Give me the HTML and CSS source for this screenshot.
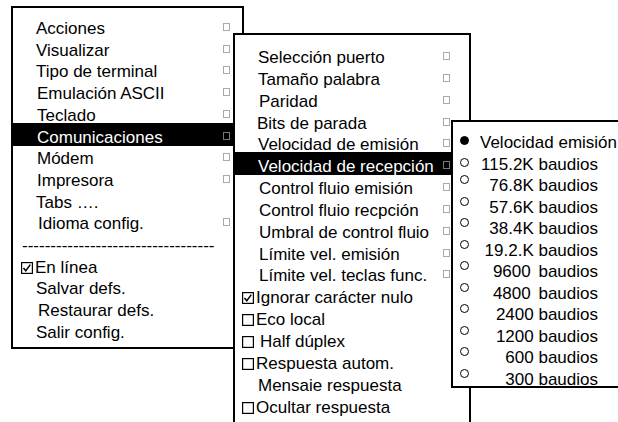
FILE: index.html
```html
<!DOCTYPE html>
<html lang="es">

<head>
    <meta charset="UTF-8">
    <meta name="viewport" content="width=device-width, initial-scale=1.0">
    <title>Configuración - Comunicaciones</title>
    <link rel="stylesheet" href="styles.css">
</head>

<body>
    <div class="desk">

        <!-- Menu principal de configuracion -->
        <div class="menu menu-main">
            <div class="row"><span class="label">Acciones</span><span class="sub"></span></div>
            <div class="row"><span class="label">Visualizar</span><span class="sub"></span></div>
            <div class="row"><span class="label">Tipo de terminal</span><span class="sub"></span></div>
            <div class="row"><span class="label nudge">Emulación ASCII</span><span class="sub"></span></div>
            <div class="row"><span class="label nudge">Teclado</span><span class="sub"></span></div>
            <div class="row hl"><span class="label nudge">Comunicaciones</span><span class="sub"></span></div>
            <div class="row"><span class="label nudge">Módem</span><span class="sub"></span></div>
            <div class="row"><span class="label nudge">Impresora</span><span class="sub"></span></div>
            <div class="row"><span class="label">Tabs ….</span></div>
            <div class="row"><span class="label nudge2">Idioma config.</span><span class="sub"></span></div>
            <div class="row"><span class="dashes">----------------------------------</span></div>
            <div class="row check">
                <svg class="box" width="12" height="12" viewBox="0 0 12 12"><rect x="0.6" y="0.6" width="10.8" height="10.8" fill="none" stroke="#000" stroke-width="1.2"/><path d="M2.5 6 L4.8 8.8 L9.3 2.6" fill="none" stroke="#000" stroke-width="1.5"/></svg>
                <span class="label">En línea</span>
            </div>
            <div class="row"><span class="label">Salvar defs.</span></div>
            <div class="row"><span class="label nudge2">Restaurar defs.</span></div>
            <div class="row"><span class="label">Salir config.</span></div>
        </div>

        <!-- Submenu comunicaciones -->
        <div class="menu menu-comm">
            <div class="row"><span class="label">Selección puerto</span><span class="sub"></span></div>
            <div class="row"><span class="label">Tamaño palabra</span><span class="sub"></span></div>
            <div class="row"><span class="label nudge">Paridad</span><span class="sub"></span></div>
            <div class="row"><span class="label back">Bits de parada</span><span class="sub"></span></div>
            <div class="row"><span class="label">Velocidad de emisión</span><span class="sub"></span></div>
            <div class="row hl"><span class="label">Velocidad de recepción</span><span class="sub"></span></div>
            <div class="row"><span class="label nudge">Control fluio emisión</span><span class="sub"></span></div>
            <div class="row"><span class="label nudge">Control fluio recpción</span><span class="sub"></span></div>
            <div class="row"><span class="label nudge">Umbral de control fluio</span><span class="sub"></span></div>
            <div class="row"><span class="label nudge">Límite vel. emisión</span><span class="sub"></span></div>
            <div class="row"><span class="label nudge">Límite vel. teclas func.</span><span class="sub"></span></div>
            <div class="row check">
                <svg class="box" width="12" height="12" viewBox="0 0 12 12"><rect x="0.6" y="0.6" width="10.8" height="10.8" fill="none" stroke="#000" stroke-width="1.2"/><path d="M2.5 6 L4.8 8.8 L9.3 2.6" fill="none" stroke="#000" stroke-width="1.5"/></svg>
                <span class="label">Ignorar carácter nulo</span>
            </div>
            <div class="row check">
                <svg class="box" width="12" height="12" viewBox="0 0 12 12"><rect x="0.6" y="0.6" width="10.8" height="10.8" fill="none" stroke="#000" stroke-width="1.2"/></svg>
                <span class="label">Eco local</span>
            </div>
            <div class="row check">
                <svg class="box" width="12" height="12" viewBox="0 0 12 12"><rect x="0.6" y="0.6" width="10.8" height="10.8" fill="none" stroke="#000" stroke-width="1.2"/></svg>
                <span class="label wide">Half dúplex</span>
            </div>
            <div class="row check">
                <svg class="box" width="12" height="12" viewBox="0 0 12 12"><rect x="0.6" y="0.6" width="10.8" height="10.8" fill="none" stroke="#000" stroke-width="1.2"/></svg>
                <span class="label">Respuesta autom.</span>
            </div>
            <div class="row"><span class="label">Mensaie respuesta</span></div>
            <div class="row check">
                <svg class="box" width="12" height="12" viewBox="0 0 12 12"><rect x="0.6" y="0.6" width="10.8" height="10.8" fill="none" stroke="#000" stroke-width="1.2"/></svg>
                <span class="label">Ocultar respuesta</span>
            </div>
        </div>

        <!-- Velocidad de recepcion -->
        <div class="menu menu-speed">
            <div class="row title"><span class="dot on"></span><span class="label">Velocidad emisión</span></div>
            <div class="row first"><span class="dot"></span><span class="label">115.2K baudios</span></div>
            <div class="row"><span class="dot"></span><span class="label">76.8K baudios</span></div>
            <div class="row"><span class="dot"></span><span class="label">57.6K baudios</span></div>
            <div class="row"><span class="dot"></span><span class="label">38.4K baudios</span></div>
            <div class="row"><span class="dot"></span><span class="label">19.2.K baudios</span></div>
            <div class="row"><span class="dot"></span><span class="label spaced">9600 baudios</span></div>
            <div class="row"><span class="dot"></span><span class="label spaced">4800 baudios</span></div>
            <div class="row"><span class="dot"></span><span class="label">2400 baudios</span></div>
            <div class="row"><span class="dot"></span><span class="label">1200 baudios</span></div>
            <div class="row"><span class="dot"></span><span class="label">600 baudios</span></div>
            <div class="row"><span class="dot"></span><span class="label">300 baudios</span></div>
        </div>

    </div>
</body>

</html>
```

FILE: styles.css
```css
body {
    margin: 0;
    background: #fff;
    color: #000;
    font-family: "Liberation Sans", Arial, sans-serif;
    font-size: 17px;
}

.desk {
    position: relative;
    width: 618px;
    height: 422px;
    overflow: hidden;
}

/* each menu is a window laid over the previous one */
.menu {
    position: absolute;
    box-sizing: border-box;
    background: #fff;
    border: 2px solid #000;
    line-height: 21.7px;
}

.menu-main {
    left: 11px;
    top: 6px;
    width: 233px;
    height: 343px;
    padding-top: 10px;
}

.menu-comm {
    left: 233px;
    top: 33px;
    width: 238px;
    height: 420px;
    padding-top: 12px;
    line-height: 21.85px;
}

.menu-speed {
    left: 451px;
    top: 120px;
    width: 180px;
    height: 268px;
    padding-top: 10px;
    line-height: 21.5px;
}

.row {
    display: flex;
    align-items: flex-start;
    white-space: nowrap;
}

.label {
    flex: 1;
    padding-left: 23px;
}

.label.nudge {
    padding-left: 24px;
}

.label.nudge2 {
    padding-left: 25px;
}

.label.back {
    padding-left: 22px;
}

/* small grey square: item opens a submenu */
.sub {
    width: 5px;
    height: 6px;
    margin-top: 5px;
    border: 1px solid #aaa;
}

.menu-main .sub {
    margin-right: 12px;
}

.menu-comm .sub {
    margin-right: 19px;
}

/* highlighted item */
.row.hl {
    box-sizing: border-box;
    height: 23px;
    margin-top: -4px;
    margin-bottom: 2.7px;
    padding-top: 4px;
    overflow: hidden;
    background: #000;
    color: #fff;
}

.menu-comm .row.hl {
    margin-bottom: 2.85px;
}

.row.hl .sub {
    border-color: #777;
}

.dashes {
    padding-left: 9px;
}

.row.check .box {
    flex: none;
    margin-top: 5px;
}

.row.check .label {
    padding-left: 2px;
}

.row.check .label.wide {
    padding-left: 6px;
}

.menu-main .row.check .box {
    margin-left: 8px;
}

.menu-comm .row.check .box {
    margin-left: 7px;
}

/* radio list */
.dot {
    flex: none;
    box-sizing: border-box;
    width: 9px;
    height: 9px;
    margin-left: 7px;
    margin-top: 0;
    border: 1.5px solid #000;
    border-radius: 50%;
}

.dot.on {
    background: #000;
    margin-top: 4px;
}

.row.first .dot {
    margin-top: 4px;
}

.menu-speed .label {
    text-align: right;
    padding-left: 0;
    padding-right: 31px;
}

.menu-speed .row.title .label {
    text-align: left;
    padding-left: 11px;
    padding-right: 0;
}

.label.spaced {
    word-spacing: 3px;
}
```
